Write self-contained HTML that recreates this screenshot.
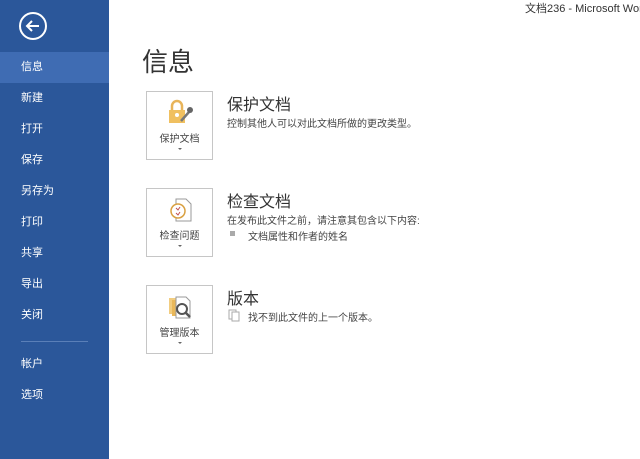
<!DOCTYPE html><html><head><meta charset="utf-8"><style>
body{margin:0;width:640px;height:459px;overflow:hidden;background:#fff;font-family:"Liberation Sans","Noto Sans CJK SC",sans-serif;position:relative}
.sb{position:absolute;left:0;top:0;width:109px;height:459px;background:#2b579a}
.it{position:absolute;left:0;width:109px;height:31px;line-height:31px;color:#fff;font-size:11px;padding-left:21px;box-sizing:border-box}
.sel{background:#3f6cb3}
.t{position:absolute;color:#444}
.box{position:absolute;left:146px;width:67px;height:69px;border:1px solid #c6c6c6;box-sizing:border-box;background:#fff}
.bl{position:absolute;left:0;width:100%;text-align:center;font-size:10px;color:#444;top:38px}
.ar{position:absolute;left:31px;top:56px;width:0;height:0;border-left:2px solid transparent;border-right:2px solid transparent;border-top:2px solid #666}
h2{position:absolute;left:227px;margin:0;font-weight:normal;font-size:16px;color:#333}
.d{position:absolute;font-size:10px;color:#444}
</style></head><body>
<div class="sb">
<svg style="position:absolute;left:18px;top:11px" width="30" height="30"><circle cx="15" cy="15" r="13" fill="none" stroke="#fff" stroke-width="2"/><path d="M9 15H21M14 10L9 15L14 20" fill="none" stroke="#fff" stroke-width="2"/></svg>
<div class="it sel" style="top:52px">信息</div>
<div class="it" style="top:83px">新建</div>
<div class="it" style="top:114px">打开</div>
<div class="it" style="top:145px">保存</div>
<div class="it" style="top:176px">另存为</div>
<div class="it" style="top:207px">打印</div>
<div class="it" style="top:238px">共享</div>
<div class="it" style="top:269px">导出</div>
<div class="it" style="top:300px">关闭</div>
<div style="position:absolute;left:21px;top:341px;width:67px;height:1px;background:#5a7fb8"></div>
<div class="it" style="top:349px">帐户</div>
<div class="it" style="top:380px">选项</div>
</div>
<div class="t" style="left:525px;top:0px;font-size:11px;white-space:nowrap;color:#333">文档236 - Microsoft Word</div>
<div class="t" style="left:142px;top:42px;font-size:26px;color:#333">信息</div>

<div class="box" style="top:91px">
<svg style="position:absolute;left:20px;top:7px" width="28" height="26"><path d="M5 11V7a5 5 0 0 1 10 0v4" fill="none" stroke="#e8b45a" stroke-width="2.5"/><rect x="2" y="11" width="16" height="13" fill="#f0c060"/><circle cx="10" cy="16" r="2" fill="#fff"/><path d="M14 22L22 13" stroke="#777" stroke-width="2.5"/><circle cx="23" cy="11" r="3" fill="#666"/></svg>
<div class="bl">保护文档</div><div class="ar"></div></div>
<h2 style="top:91px">保护文档</h2>
<div class="d" style="left:227px;top:115px">控制其他人可以对此文档所做的更改类型。</div>

<div class="box" style="top:188px">
<svg style="position:absolute;left:20px;top:8px" width="28" height="26"><path d="M9 2h10l5 5v17H9z" fill="#fff" stroke="#999"/><circle cx="11" cy="14" r="7" fill="#fff" stroke="#d9a040" stroke-width="1.5"/><path d="M9 11l2 2 2-3M9 16l2 2 2-3" stroke="#c05050" fill="none"/></svg>
<div class="bl">检查问题</div><div class="ar"></div></div>
<h2 style="top:188px">检查文档</h2>
<div class="d" style="left:227px;top:212px">在发布此文件之前，请注意其包含以下内容:</div>
<div style="position:absolute;left:230px;top:231px;width:5px;height:5px;background:#aaa"></div>
<div class="d" style="left:248px;top:228px">文档属性和作者的姓名</div>

<div class="box" style="top:285px">
<svg style="position:absolute;left:20px;top:8px" width="28" height="26"><rect x="2" y="4" width="12" height="16" fill="#f2cd80"/><rect x="5" y="6" width="12" height="16" fill="#e9b85a"/><path d="M9 3h10l4 4v17H9z" fill="#fff" stroke="#999"/><circle cx="15" cy="15" r="5" fill="none" stroke="#555" stroke-width="2"/><path d="M19 19l4 4" stroke="#555" stroke-width="2.5"/></svg>
<div class="bl">管理版本</div><div class="ar"></div></div>
<h2 style="top:285px">版本</h2>
<svg style="position:absolute;left:228px;top:309px" width="12" height="13"><rect x="1" y="1" width="7" height="9" fill="none" stroke="#aaa"/><rect x="4" y="3" width="7" height="9" fill="#fff" stroke="#aaa"/></svg>
<div class="d" style="left:248px;top:309px">找不到此文件的上一个版本。</div>
</body></html>
